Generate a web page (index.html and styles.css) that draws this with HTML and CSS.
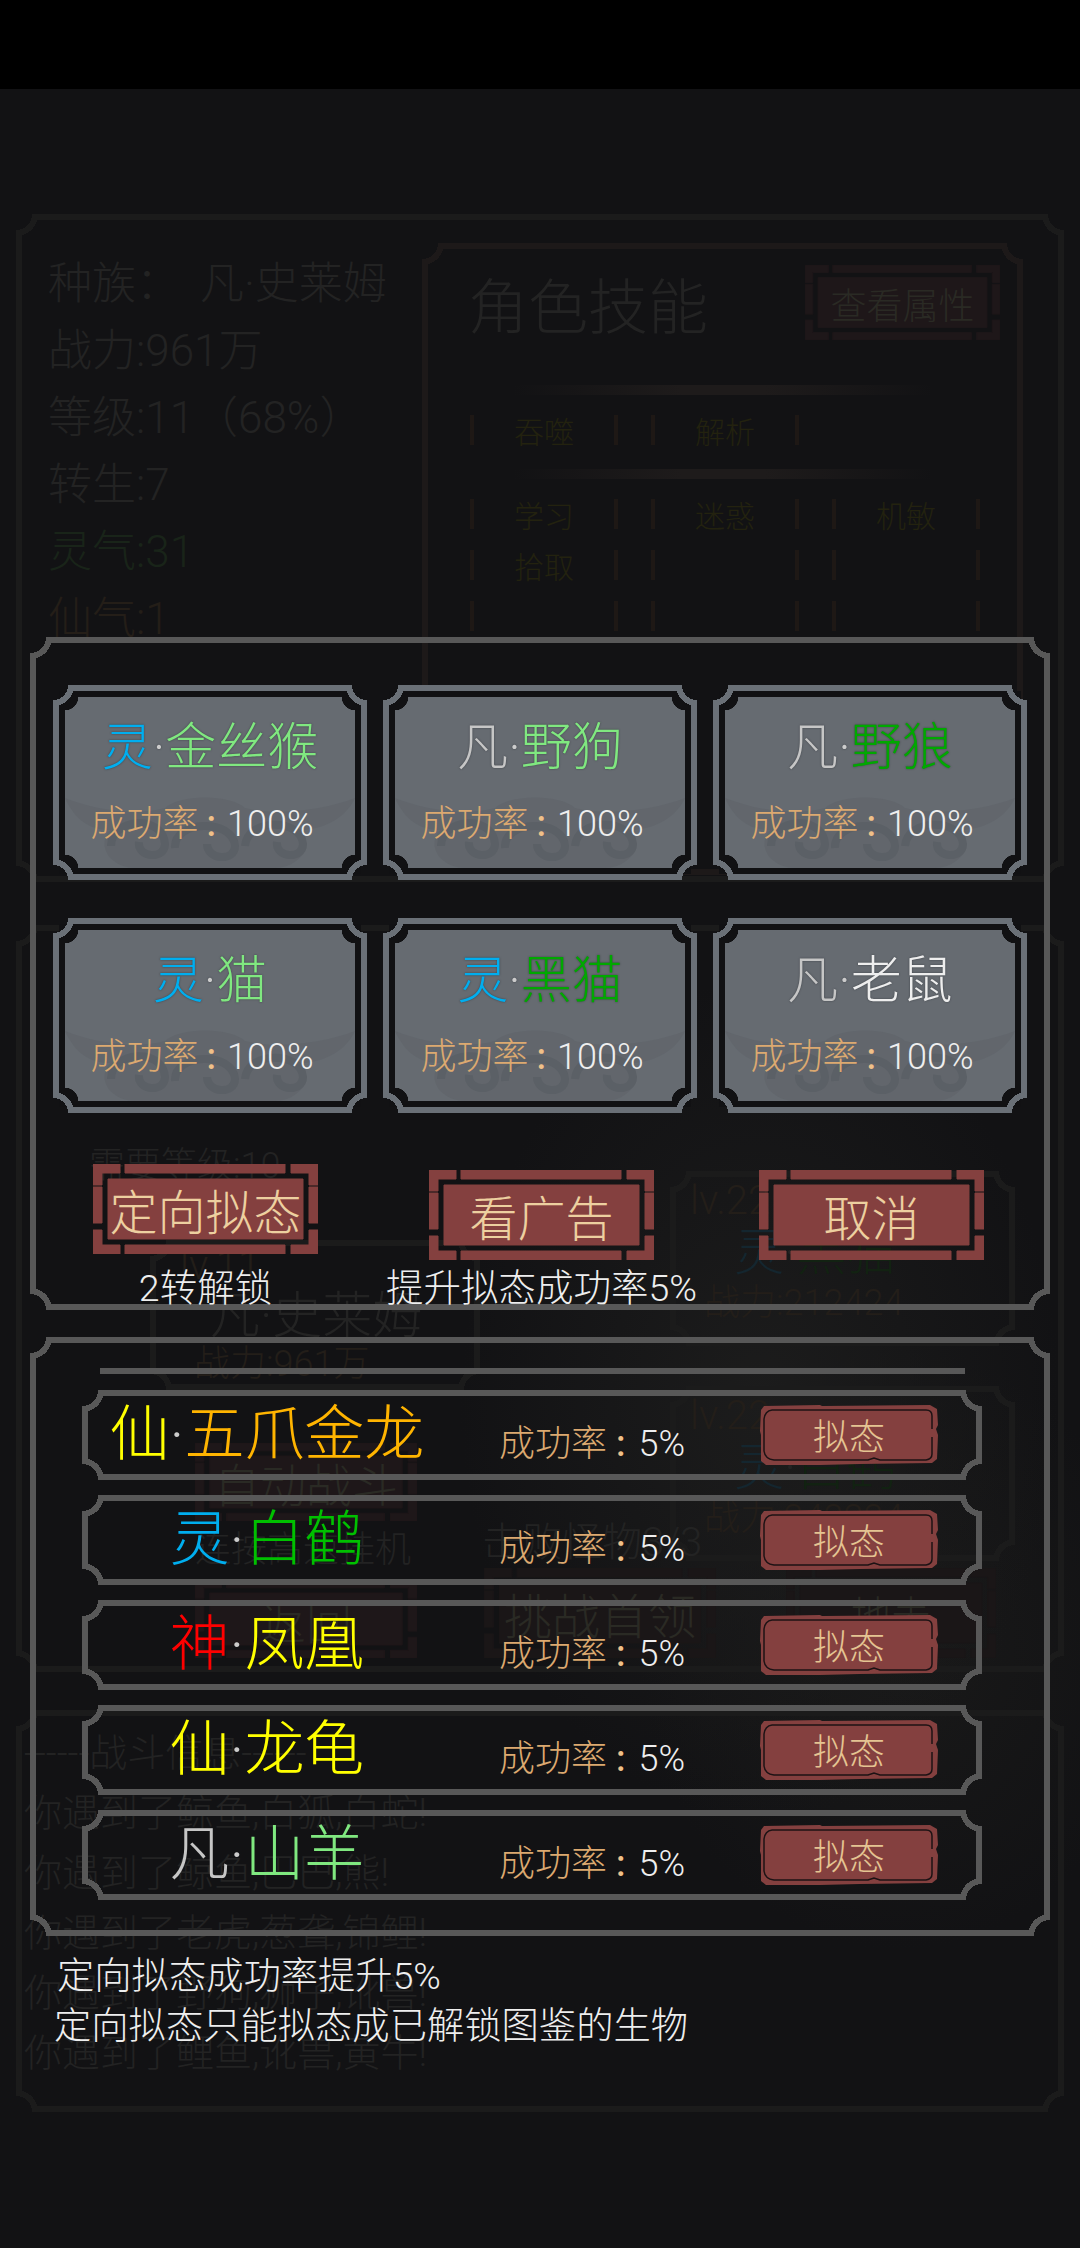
FILE: index.html
```html
<!DOCTYPE html>
<html lang="zh">
<head>
<meta charset="UTF-8">
<title>定向拟态</title>
<link rel="stylesheet" href="styles.css">
</head>
<body>

<svg class="defs" width="0" height="0">
  <symbol id="btn-frame" viewBox="0 0 225 90" preserveAspectRatio="none">
    <path d="M0 0H27V9H9V21H0Z"/>
    <path d="M32 0H192V9H32Z"/>
    <path d="M198 0H225V21H216V9H198Z"/>
    <path d="M0 23H9V59H0Z"/>
    <path d="M216 23H225V59H216Z"/>
    <path d="M0 66H9V81H27V90H0Z"/>
    <path d="M32 81H192V90H32Z"/>
    <path d="M216 66H225V90H198V81H216Z"/>
    <path d="M15 15H210V75H15Z"/>
  </symbol>
  <symbol id="btn-rough" viewBox="0 0 178 60">
    <path fill="#84403f" stroke="none" d="M4 1L60 0L62 1L170 0L177 4L178 20L176 24L178 30L177 54L172 58L100 59L60 60L6 60L1 56L1 30L0 26L1 5Z"/>
    <path fill="none" stroke="#1c1214" stroke-width="1.5" d="M12 5H166Q172 5 172 11V24M172 32V49Q172 54 166 55H120L114 53L108 55H14Q5 54 4 46V14Q5 6 12 5"/>
  </symbol>
  <symbol id="cloud" viewBox="0 0 290 72">
    <path stroke="none" opacity=".5" d="M0 2C30 14 70 20 100 12C115 -2 165 -2 180 12C210 20 260 14 290 2C280 24 255 34 235 34C250 52 232 72 210 72H70C48 72 30 52 45 34C25 34 10 24 0 2Z"/>
    <path fill="none" stroke-width="8" d="M46 50C46 22 98 18 100 48C100 64 72 62 74 46M110 52C108 24 168 22 170 50C170 66 142 64 142 48M180 50C182 22 236 22 238 48C238 64 210 62 212 46"/>
  </symbol>
</svg>

<div class="statusbar"></div>

<div class="scene">
  <section class="frame dim top-panel">
    <div class="stats">
      <p>种族：<span class="race">凡·史莱姆</span></p>
      <p>战力:961万</p>
      <p>等级:11（68%）</p>
      <p>转生:7</p>
      <p class="stat-green">灵气:31</p>
      <p class="stat-brown">仙气:1</p>
    </div>
    <div class="frame dim-red skills">
      <div class="skills-head">
        <h2>角色技能</h2>
        <div class="dim-btn attr-btn"><svg class="btn-bg"><use href="#btn-frame"/></svg><span>查看属性</span></div>
      </div>
      <div class="skill-line"></div>
      <div class="skill-grid">
        <span>吞噬</span><span>解析</span><span class="empty"></span>
      </div>
      <div class="skill-line"></div>
      <div class="skill-grid">
        <span>学习</span><span>迷惑</span><span>机敏</span>
        <span>拾取</span><span></span><span></span>
        <span></span><span></span><span></span>
      </div>
    </div>
  </section>

  <section class="frame dim mid-panel">
    <div class="mid-left">
      <p class="need-level">需要等级:10</p>
      <div class="frame dim hero-card">
        <p class="lv">lv.11</p>
        <p class="hero-name">凡·史莱姆</p>
        <p class="power">战力:961万</p>
      </div>
      <div class="dim-btn auto-btn"><svg class="btn-bg"><use href="#btn-frame"/></svg><span>自动战斗</span></div>
      <p class="hint">连按高速挂机</p>
      <div class="dim-btn auto-btn back-btn"><svg class="btn-bg"><use href="#btn-frame"/></svg><span>返回</span></div>
    </div>
    <div class="mid-right">
      <div class="frame dim foe-card">
        <p class="lv">lv.22</p>
        <p class="foe-name"><span class="dim-ling">灵</span>·<span class="dim-green">黑猫</span></p>
        <p class="power">战力:212424</p>
      </div>
      <div class="frame dim foe-card">
        <p class="lv">lv.22</p>
        <p class="foe-name"><span class="dim-ling">灵</span>·<span class="dim-green">白鹤</span></p>
        <p class="power">战力:242224</p>
      </div>
    </div>
    <p class="beat">击败怪物3/3</p>
    <div class="dim-btn boss"><svg class="btn-bg"><use href="#btn-frame"/></svg><span>挑战首领</span></div>
    <div class="dim-btn land"><svg class="btn-bg"><use href="#btn-frame"/></svg><span>地表</span></div>
  </section>

  <section class="frame dim log-panel">
    <p class="log-title">------战斗信息------</p>
    <p>你遇到了鲸鱼,白狐,白蛇!</p>
    <p>你遇到了鲸鱼,巴巴,熊!</p>
    <p>你遇到了老虎,葱聋,锦鲤!</p>
    <p>你遇到了野狗,狮子,讹兽!</p>
    <p>你遇到了鲤鱼,讹兽,黄牛!</p>
  </section>
</div>

<div class="modal">
  <section class="frame panel panel-pick">
    <div class="card-grid">
      <div class="card"><div class="card-face">
        <svg class="cloud"><use href="#cloud"/></svg>
        <p class="card-name"><span class="c-ling">灵</span><i>·</i><span class="c-light">金丝猴</span></p>
        <p class="rate"><span class="rate-label">成功率</span><span class="colon">:</span>100%</p>
      </div></div>
      <div class="card"><div class="card-face">
        <svg class="cloud"><use href="#cloud"/></svg>
        <p class="card-name"><span class="c-fan">凡</span><i>·</i><span class="c-light">野狗</span></p>
        <p class="rate"><span class="rate-label">成功率</span><span class="colon">:</span>100%</p>
      </div></div>
      <div class="card"><div class="card-face">
        <svg class="cloud"><use href="#cloud"/></svg>
        <p class="card-name"><span class="c-fan">凡</span><i>·</i><span class="c-green">野狼</span></p>
        <p class="rate"><span class="rate-label">成功率</span><span class="colon">:</span>100%</p>
      </div></div>
      <div class="card"><div class="card-face">
        <svg class="cloud"><use href="#cloud"/></svg>
        <p class="card-name"><span class="c-ling">灵</span><i>·</i><span class="c-light">猫</span></p>
        <p class="rate"><span class="rate-label">成功率</span><span class="colon">:</span>100%</p>
      </div></div>
      <div class="card"><div class="card-face">
        <svg class="cloud"><use href="#cloud"/></svg>
        <p class="card-name"><span class="c-ling">灵</span><i>·</i><span class="c-green">黑猫</span></p>
        <p class="rate"><span class="rate-label">成功率</span><span class="colon">:</span>100%</p>
      </div></div>
      <div class="card"><div class="card-face">
        <svg class="cloud"><use href="#cloud"/></svg>
        <p class="card-name"><span class="c-fan">凡</span><i>·</i><span class="c-white">老鼠</span></p>
        <p class="rate"><span class="rate-label">成功率</span><span class="colon">:</span>100%</p>
      </div></div>
    </div>

    <div class="actions">
      <div class="action action-raised">
        <button class="btn"><svg class="btn-bg"><use href="#btn-frame"/></svg><span>定向拟态</span></button>
        <p class="caption">2转解锁</p>
      </div>
      <div class="action action-ad">
        <button class="btn"><svg class="btn-bg"><use href="#btn-frame"/></svg><span>看广告</span></button>
        <p class="caption">提升拟态成功率5%</p>
      </div>
      <div class="action action-cancel">
        <button class="btn"><svg class="btn-bg"><use href="#btn-frame"/></svg><span>取消</span></button>
      </div>
    </div>
  </section>

  <section class="frame panel panel-list">
    <div class="clip-line"></div>
    <div class="rows">
      <div class="frame row">
        <p class="row-name"><span class="c-xian">仙</span><i>·</i><span class="c-gold">五爪金龙</span></p>
        <p class="rate row-rate"><span class="rate-label">成功率</span><span class="colon">:</span>5%</p>
        <button class="small-btn"><svg class="btn-bg"><use href="#btn-rough"/></svg><span>拟态</span></button>
      </div>
      <div class="frame row">
        <p class="row-name"><span class="c-ling">灵</span><i>·</i><span class="c-green2">白鹤</span></p>
        <p class="rate row-rate"><span class="rate-label">成功率</span><span class="colon">:</span>5%</p>
        <button class="small-btn"><svg class="btn-bg"><use href="#btn-rough"/></svg><span>拟态</span></button>
      </div>
      <div class="frame row">
        <p class="row-name"><span class="c-shen">神</span><i>·</i><span class="c-xian">凤凰</span></p>
        <p class="rate row-rate"><span class="rate-label">成功率</span><span class="colon">:</span>5%</p>
        <button class="small-btn"><svg class="btn-bg"><use href="#btn-rough"/></svg><span>拟态</span></button>
      </div>
      <div class="frame row">
        <p class="row-name"><span class="c-xian">仙</span><i>·</i><span class="c-xian">龙龟</span></p>
        <p class="rate row-rate"><span class="rate-label">成功率</span><span class="colon">:</span>5%</p>
        <button class="small-btn"><svg class="btn-bg"><use href="#btn-rough"/></svg><span>拟态</span></button>
      </div>
      <div class="frame row">
        <p class="row-name"><span class="c-fan">凡</span><i>·</i><span class="c-light">山羊</span></p>
        <p class="rate row-rate"><span class="rate-label">成功率</span><span class="colon">:</span>5%</p>
        <button class="small-btn"><svg class="btn-bg"><use href="#btn-rough"/></svg><span>拟态</span></button>
      </div>
    </div>
  </section>

  <div class="notes">
    <p class="note-first">定向拟态成功率提升5%</p>
    <p>定向拟态只能拟态成已解锁图鉴的生物</p>
  </div>
</div>

</body>
</html>
```

FILE: styles.css
```css
* {
  box-sizing: border-box;
}

body {
  position: relative;
  margin: 0;
  width: 1080px;
  height: 2248px;
  overflow: hidden;
  background-color: #121214;
  background-image:
    radial-gradient(ellipse 300px 420px at 760px 1400px, #1c1c1c, transparent),
    radial-gradient(ellipse 260px 300px at 900px 1650px, #191919, transparent);
  font-family: Roboto, "Noto Sans CJK SC", sans-serif;
  font-weight: 300;
  color: #232323;
}

p, h2 {
  margin: 0;
  font-weight: 300;
}

i {
  font-style: normal;
}

.defs {
  position: absolute;
}

.statusbar {
  height: 89px;
  background: #000;
}

/* marco con esquinas cóncavas, sólo gradientes */
.frame {
  --c: #585858;
  --r: 22px;
  --w: 6px;
  position: relative;
  background-repeat: no-repeat;
  background-image:
    radial-gradient(circle at 0 0, transparent calc(var(--r) - var(--w)), var(--c) calc(var(--r) - var(--w)), var(--c) var(--r), transparent var(--r)),
    radial-gradient(circle at 100% 0, transparent calc(var(--r) - var(--w)), var(--c) calc(var(--r) - var(--w)), var(--c) var(--r), transparent var(--r)),
    radial-gradient(circle at 0 100%, transparent calc(var(--r) - var(--w)), var(--c) calc(var(--r) - var(--w)), var(--c) var(--r), transparent var(--r)),
    radial-gradient(circle at 100% 100%, transparent calc(var(--r) - var(--w)), var(--c) calc(var(--r) - var(--w)), var(--c) var(--r), transparent var(--r)),
    linear-gradient(var(--c), var(--c)),
    linear-gradient(var(--c), var(--c)),
    linear-gradient(var(--c), var(--c)),
    linear-gradient(var(--c), var(--c));
  background-size:
    var(--r) var(--r), var(--r) var(--r), var(--r) var(--r), var(--r) var(--r),
    calc(100% - 2 * var(--r) + 2 * var(--w)) var(--w),
    calc(100% - 2 * var(--r) + 2 * var(--w)) var(--w),
    var(--w) calc(100% - 2 * var(--r) + 2 * var(--w)),
    var(--w) calc(100% - 2 * var(--r) + 2 * var(--w));
  background-position:
    0 0, 100% 0, 0 100%, 100% 100%,
    50% 0, 50% 100%, 0 50%, 100% 50%;
}

.frame.dim {
  --c: #1b1b1b;
}

.frame.dim-red {
  --c: #1d1919;
}

/* fondo apagado */
.scene {
  padding: 125px 16px 0;
}

.top-panel {
  display: flex;
  width: 1048px;
  height: 668px;
  padding: 37px 0 0 32px;
  overflow: hidden;
}

.stats {
  width: 374px;
  font-size: 44px;
  line-height: 67px;
}

.race {
  margin-left: 20px;
}

.stat-green {
  color: #192419;
}

.stat-brown {
  color: #241e18;
}

.skills {
  width: 601px;
  height: 632px;
  margin-top: -8px;
  padding: 22px 46px 0 46px;
}

.skills-head {
  display: flex;
  justify-content: space-between;
  align-items: center;
  height: 75px;
  margin-bottom: 45px;
}

.skills-head h2 {
  font-size: 60px;
}

.dim-btn {
  position: relative;
  display: flex;
  align-items: center;
  justify-content: center;
  color: #1e1719;
}

.dim-btn span {
  position: relative;
  color: #2a2a24;
}

.btn-bg {
  position: absolute;
  inset: 0;
  width: 100%;
  height: 100%;
  fill: currentColor;
  stroke: currentColor;
}

.attr-btn {
  width: 195px;
  height: 75px;
  margin-right: -23px;
  font-size: 36px;
}

.skill-line {
  width: 420px;
  height: 10px;
  margin: 0 auto;
  background: linear-gradient(to right, transparent, #1e1b1b 40%, #1e1b1b 60%, transparent);
}

.skill-grid {
  display: grid;
  grid-template-columns: repeat(3, 148px);
  grid-auto-rows: 51px;
  column-gap: 33px;
  margin: 9px 0 14px 2px;
  font-size: 30px;
  color: #23220f;
}

.skill-grid span {
  display: flex;
  align-items: center;
  justify-content: center;
  height: 30px;
  align-self: center;
  border-left: 4px solid #1e1815;
  border-right: 4px solid #1e1815;
}

.skill-grid span.empty {
  border: 0;
}

.mid-panel {
  display: flex;
  width: 1048px;
  height: 747px;
  margin-top: 43px;
}

.mid-left {
  width: 640px;
  padding: 218px 0 0 73px;
}

.need-level {
  font-size: 36px;
  line-height: 46px;
}

.hero-card {
  width: 330px;
  height: 150px;
  margin: 51px 0 0 61px;
  padding: 4px 0 0 30px;
  text-align: left;
}

.lv {
  font-size: 40px;
  line-height: 44px;
  color: #231e19;
}

.hero-name {
  font-size: 50px;
  line-height: 56px;
  margin-left: 30px;
}

.power {
  font-size: 36px;
  line-height: 40px;
  color: #231e19;
  margin-left: 14px;
}

.auto-btn {
  width: 222px;
  height: 78px;
  margin: 53px 0 0 106px;
  font-size: 46px;
}

.hint {
  margin: 6px 0 0 106px;
  font-size: 36px;
  line-height: 46px;
}

.back-btn {
  margin-top: 7px;
}

.mid-right {
  padding-top: 246px;
}

.foe-card {
  width: 345px;
  height: 175px;
  margin: 0 0 40px 14px;
  padding: 8px 0 0 20px;
}

.foe-name {
  font-size: 50px;
  line-height: 60px;
  margin-left: 44px;
}

.dim-ling {
  color: #14262f;
}

.dim-green {
  color: #122212;
}

.beat {
  position: absolute;
  left: 466px;
  top: 585px;
  font-size: 40px;
}

/* botones tapados por el modal */
.boss,
.land {
  position: absolute;
  top: 643px;
  height: 90px;
  font-size: 48px;
  color: #1a1617;
}

.boss {
  left: 468px;
  width: 232px;
}

.land {
  left: 770px;
  width: 210px;
  font-size: 40px;
}

.log-panel {
  width: 1048px;
  height: 402px;
  margin-top: 38px;
  padding: 13px 0 0 8px;
  font-size: 38px;
  line-height: 60px;
}

/* capa superior */
.modal {
  position: absolute;
  top: 637px;
  left: 30px;
  width: 1020px;
}

.panel-pick {
  height: 673px;
  padding: 48px 0 0 23px;
}

.card-grid {
  display: grid;
  grid-template-columns: repeat(3, 314px);
  grid-auto-rows: 195px;
  column-gap: 16px;
  row-gap: 38px;
}

.card {
  position: relative;
  padding: 6px;
  background: linear-gradient(#6a7077, #6a7077) 20px 0 / 274px 6px no-repeat,
    linear-gradient(#6a7077, #6a7077) 20px 100% / 274px 6px no-repeat,
    linear-gradient(#6a7077, #6a7077) 0 20px / 6px 155px no-repeat,
    linear-gradient(#6a7077, #6a7077) 100% 20px / 6px 155px no-repeat;
}

.card::after {
  content: "";
  position: absolute;
  inset: 0;
  --g: transparent 15px, #6a7077 15px, #6a7077 21px, transparent 21px;
  background:
    radial-gradient(circle at 0 0, var(--g)),
    radial-gradient(circle at 100% 0, var(--g)),
    radial-gradient(circle at 0 100%, var(--g)),
    radial-gradient(circle at 100% 100%, var(--g));
}

.card-face {
  position: relative;
  height: 100%;
  padding-top: 21px;
  border: 6px solid #111113;
  overflow: hidden;
  text-align: center;
  --d: #111113 13px, transparent 13.5px;
  background:
    radial-gradient(circle at 0 0, var(--d)),
    radial-gradient(circle at 100% 0, var(--d)),
    radial-gradient(circle at 0 100%, var(--d)),
    radial-gradient(circle at 100% 100%, var(--d)),
    #666b71;
}

.cloud {
  position: absolute;
  left: 0;
  bottom: 0;
  width: 290px;
  height: 72px;
  fill: #5d6268;
  stroke: #5b6066;
}

.card-name {
  position: relative;
  font-size: 51px;
  line-height: 60px;
  color: #ccc;
  text-shadow: 0 0 2px rgba(40, 44, 50, .7);
}

.rate {
  position: relative;
  font-size: 36px;
  line-height: 40px;
  color: #eee;
}

.card .rate {
  margin: 26px 16px 0 0;
}

.rate-label {
  color: #dca970;
}

.colon {
  margin: 0 11px 0 8px;
  color: #f0c088;
  font-weight: 500;
}

.c-ling { color: #00aeef; }
.c-light { color: #80e880; }
.c-fan { color: #c6c6c6; }
.c-green { color: #00a800; }
.c-green2 { color: #00c000; }
.c-white { color: #eee; }
.c-xian { color: #ffff00; }
.c-gold { color: #ffb400; }
.c-shen { color: #ff0000; }

.actions {
  display: flex;
  margin: 57px 0 0 40px;
}

.action {
  width: 225px;
  display: flex;
  flex-direction: column;
  align-items: center;
}

.action-ad {
  margin-left: 111px;
}

.action-cancel {
  margin-left: 105px;
}

.btn {
  position: relative;
  display: flex;
  align-items: center;
  justify-content: center;
  flex: none;
  width: 225px;
  height: 90px;
  padding: 0;
  border: 0;
  background: none;
  color: #84403f;
  font: inherit;
}

.action-raised .btn {
  margin: -6px 0 6px;
}

.btn span {
  position: relative;
  font-size: 48px;
  color: #edd0a0;
}

.caption {
  margin-top: 6px;
  font-size: 37.5px;
  line-height: 44px;
  white-space: nowrap;
  color: #eee;
}

.panel-list {
  height: 599px;
  margin-top: 27px;
  padding: 31px 0 0 52px;
}

.clip-line {
  width: 865px;
  height: 6px;
  margin: 0 0 16px 18px;
  background: #585858;
}

.rows {
  display: flex;
  flex-direction: column;
  gap: 15px;
}

.row {
  display: flex;
  align-items: center;
  width: 900px;
  height: 90px;
}

.row-name {
  width: 370px;
  font-size: 60px;
  line-height: 70px;
  text-align: center;
  color: #ccc;
}

.row-rate {
  margin: 18px 0 0 47px;
  white-space: nowrap;
}

.row-rate .colon {
  margin: 0 13px 0 9px;
}

.small-btn {
  position: relative;
  display: flex;
  align-items: center;
  justify-content: center;
  width: 178px;
  height: 60px;
  margin-left: auto;
  margin-right: 44px;
  padding: 0 0 3px;
  border: 0;
  background: none;
  font: inherit;
}

.small-btn span {
  position: relative;
  font-size: 36px;
  color: #e4c492;
}

.notes {
  margin-top: 15px;
  padding-left: 24px;
  font-size: 37.3px;
  line-height: 50px;
  color: #eee;
}

.note-first {
  padding-left: 3px;
}
```
